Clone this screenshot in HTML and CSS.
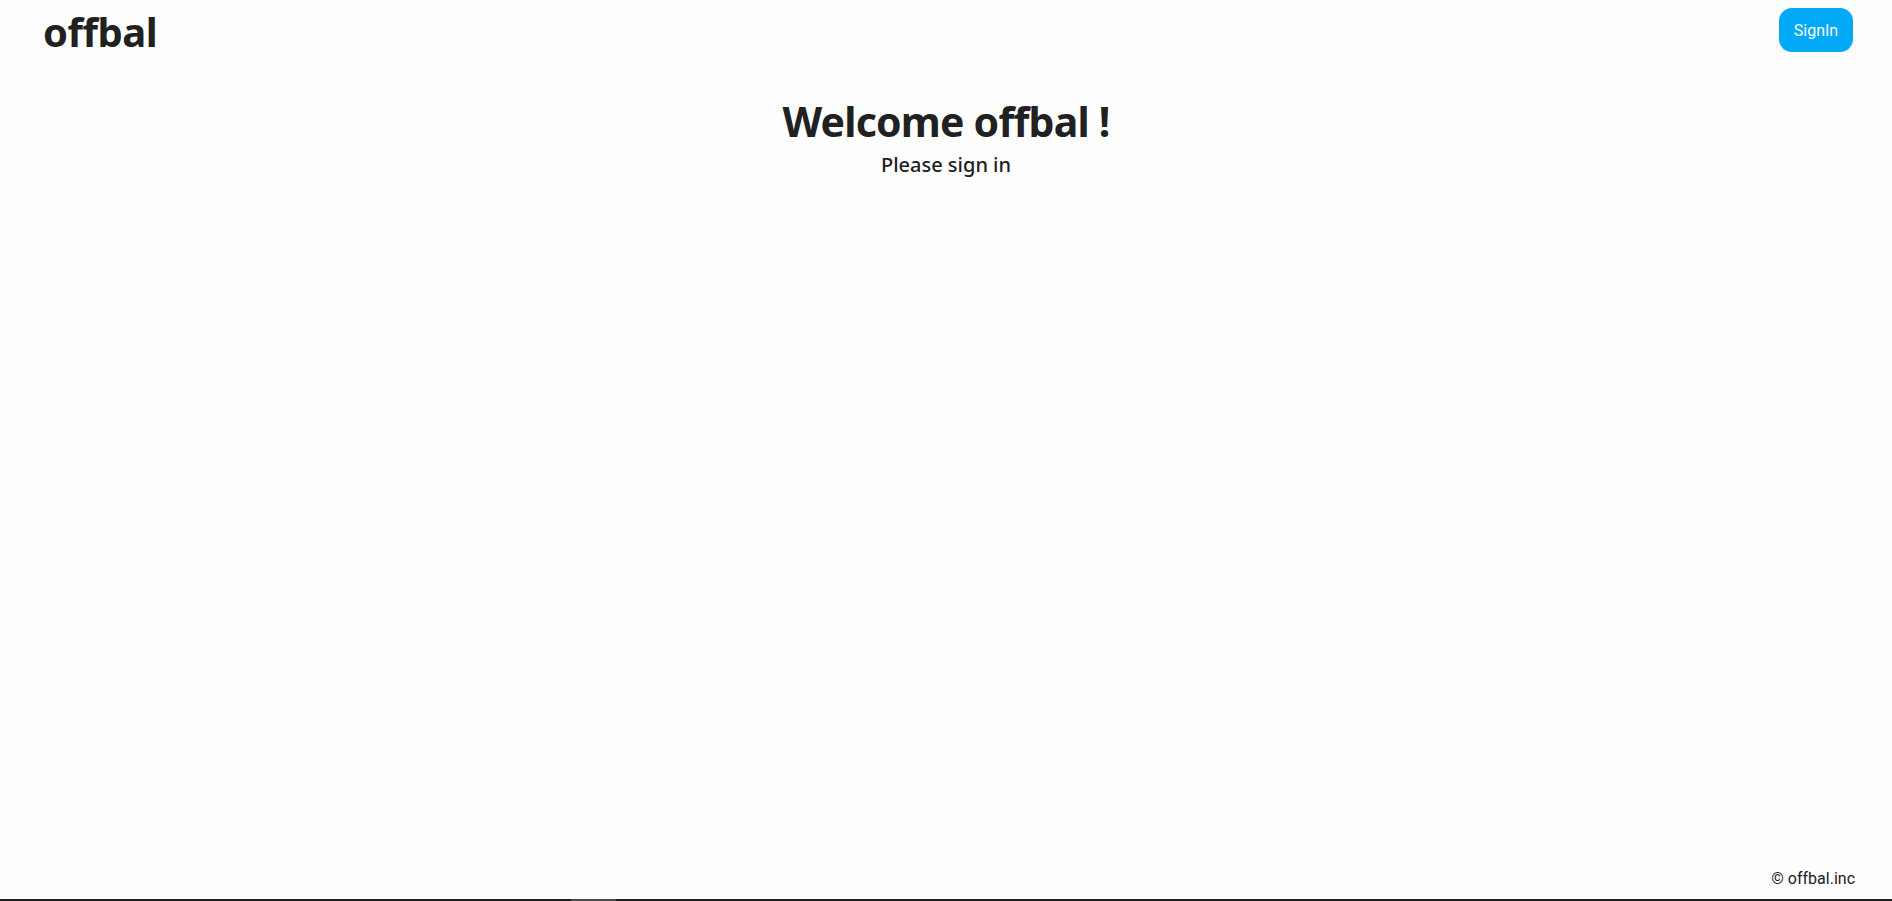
FILE: index.html
```html
<!DOCTYPE html>
<html lang="en">
<head>
<meta charset="utf-8">
<title>offbal</title>
<link rel="stylesheet" href="styles.css">
</head>
<body>
<div class="page">
  <header class="topbar">
    <div class="logo">offbal</div>
    <button class="signin">SignIn</button>
  </header>
  <main class="hero">
    <h1 class="hero-title">Welcome offbal !</h1>
    <p class="hero-sub">Please sign in</p>
  </main>
  <footer class="footer">© offbal.inc</footer>
</div>
<div class="scrollbar"><div class="scrollbar-thumb"></div></div>
</body>
</html>
```

FILE: styles.css
```css
html, body {
  margin: 0;
  padding: 0;
  height: 100%;
  background: #fefefe;
}
body {
  font-family: "Noto Sans", "Liberation Sans", sans-serif;
  color: #212121;
}
.page {
  height: 899px;
  display: flex;
  flex-direction: column;
}
.topbar {
  display: flex;
  justify-content: space-between;
  align-items: flex-start;
  padding: 8px 39px 0 43px;
}
.logo {
  font-size: 40px;
  font-weight: 700;
  line-height: 48px;
  letter-spacing: -0.5px;
}
.signin {
  background: #03a9f4;
  color: #fff;
  border: none;
  border-radius: 13px;
  width: 74px;
  height: 44px;
  font-family: Roboto, "Liberation Sans", sans-serif;
  font-size: 16px;
  padding: 0;
  cursor: pointer;
}
.hero {
  text-align: center;
  margin-top: 40px;
}
.hero-title {
  margin: 0;
  font-size: 41px;
  font-weight: 700;
  line-height: 50px;
  letter-spacing: -0.8px;
}
.hero-sub {
  margin: 6px 0 0;
  font-size: 20px;
  font-weight: 500;
  line-height: 26px;
}
.footer {
  margin-top: auto;
  text-align: right;
  padding: 0 37px 10px 0;
  font-family: Roboto, "Liberation Sans", sans-serif;
  font-size: 16px;
  line-height: 20px;
}
.scrollbar {
  position: fixed;
  left: 0;
  right: 0;
  bottom: 0;
  height: 2px;
  background: #1e1e1e;
}
.scrollbar-thumb {
  margin-left: 571px;
  width: 45px;
  height: 2px;
  background: #4a4a4a;
}
```
